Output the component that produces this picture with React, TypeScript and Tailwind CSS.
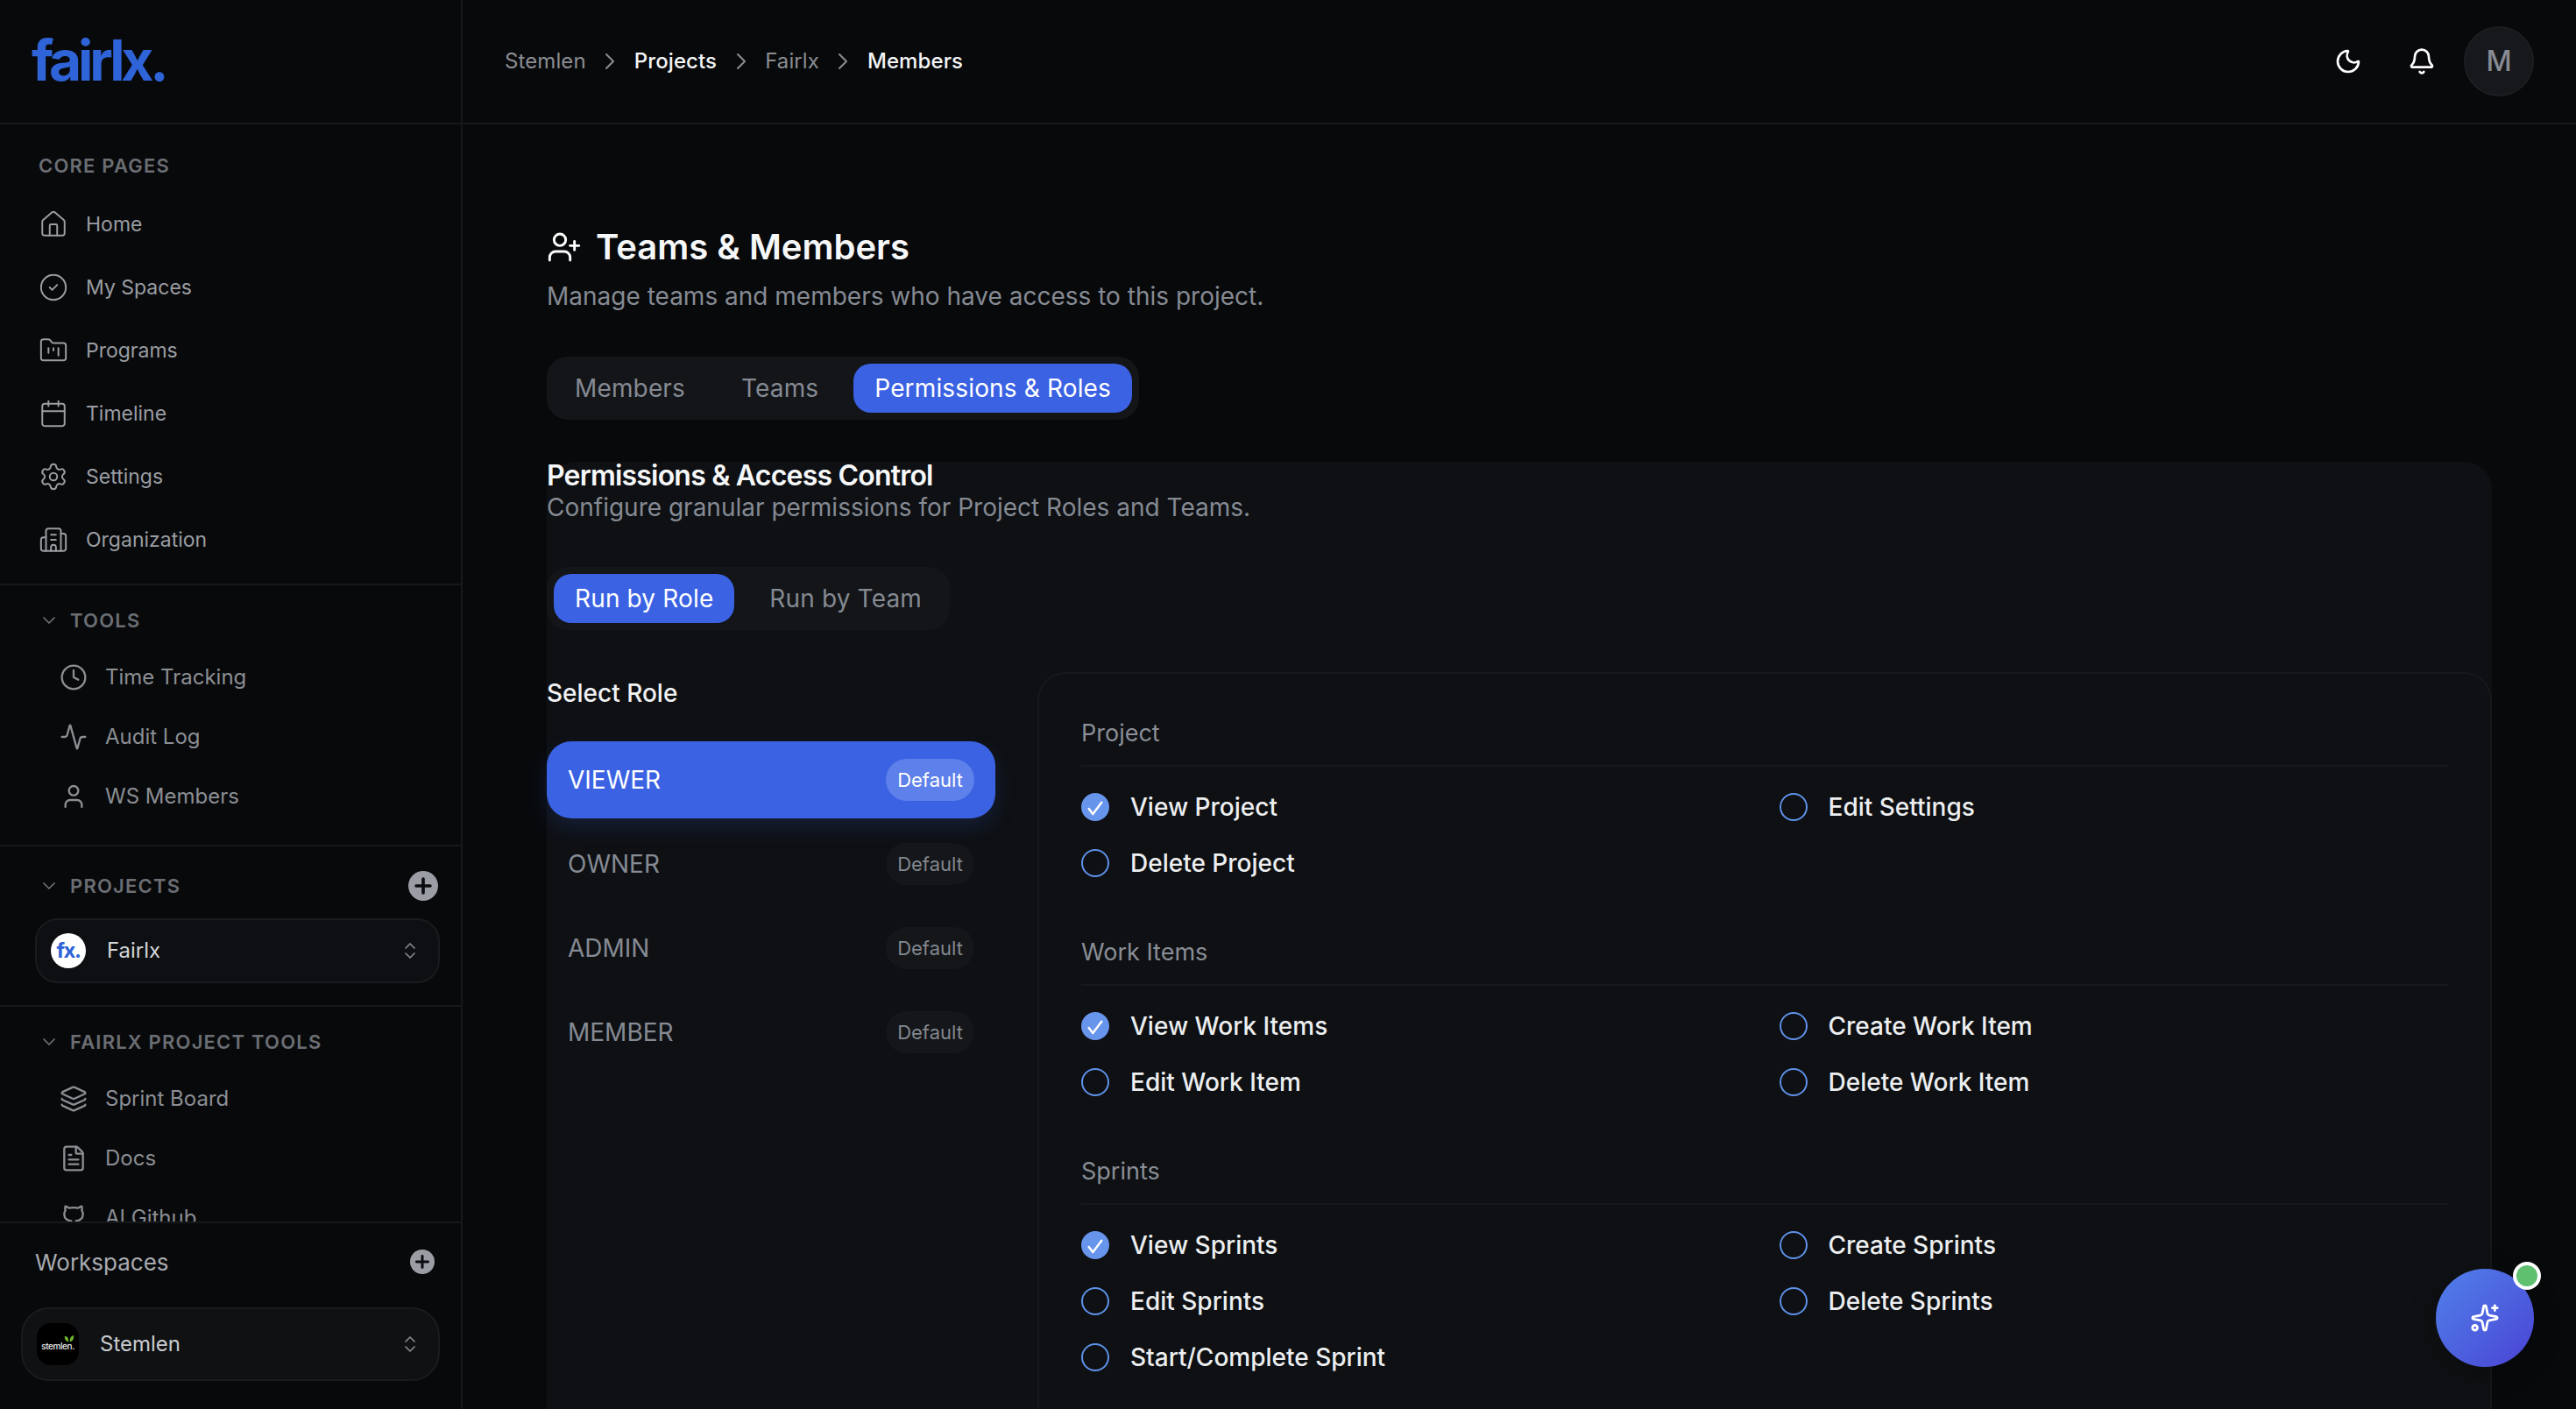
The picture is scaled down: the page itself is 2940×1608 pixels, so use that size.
import React from "react";
import {
  Home, CircleCheck, FolderKanban, Calendar, Settings, Building2, ChevronDown, Clock, Activity, User,
  ChevronsUpDown, Layers, FileText, Github, ChevronRight, Moon, Bell, UserPlus, Sparkles,
} from "lucide-react";

const core = [
  { label: "Home", Icon: Home },
  { label: "My Spaces", Icon: CircleCheck },
  { label: "Programs", Icon: FolderKanban },
  { label: "Timeline", Icon: Calendar },
  { label: "Settings", Icon: Settings },
  { label: "Organization", Icon: Building2 },
];

function PlusDot({ className }: { className: string }) {
  return (
    <svg viewBox="0 0 32 32" className={className}>
      <circle cx="16" cy="16" r="16" fill="#9a9da3" />
      <path d="M16 8.5v15M8.5 16h15" stroke="#0b0c0f" strokeWidth="3.4" strokeLinecap="round" />
    </svg>
  );
}

function SectionHead({ label, plus }: { label: string; plus?: boolean }) {
  return (
    <div className="flex h-[32px] items-center">
      <ChevronDown className="ml-[8px] h-[24px] w-[24px] text-[#6f7277]" strokeWidth={1.75} />
      <span className="ml-[12px] text-[22px] font-semibold tracking-[1.2px] text-[#6b6e73]">{label}</span>
      {plus && <PlusDot className="mr-[2px] ml-auto h-[34px] w-[34px]" />}
    </div>
  );
}

function ToolItem({ label, Icon }: { label: string; Icon: React.ComponentType<{ className?: string; strokeWidth?: number }> }) {
  return (
    <div className="flex h-[68px] items-center pl-[32px] text-[#8b8e93]">
      <Icon className="h-[32px] w-[32px] shrink-0" strokeWidth={1.75} />
      <span className="ml-[20px] text-[24px] whitespace-nowrap">{label}</span>
    </div>
  );
}

function Sidebar() {
  return (
    <aside className="flex h-full w-[528px] shrink-0 flex-col border-r-2 border-[#16181b]">
      <div className="flex h-[142px] shrink-0 items-center border-b-2 border-[#16181b] pl-[36px]">
        <span className="mt-[-2px] text-[64px] leading-none font-bold tracking-[-0.065em] text-[#2f63d8]">fairlx.</span>
      </div>
      <div className="flex-1 overflow-hidden">
        <div className="border-b-2 border-[#16181b] pt-[32px] pb-[14px]">
          <div className="mb-[14px] h-[32px] pl-[44px] text-[22px] leading-[30px] font-semibold tracking-[1.2px] text-[#6b6e73]">CORE PAGES</div>
          {core.map(({ label, Icon }) => (
            <div key={label} className="flex h-[72px] items-center pl-[44px] text-[#9a9da2]">
              <Icon className="h-[34px] w-[34px] shrink-0" strokeWidth={1.4} />
              <span className="ml-[20px] text-[23px]">{label}</span>
            </div>
          ))}
        </div>
        <div className="border-b-2 border-[#16181b] pt-[24px] pb-[21px] pl-[36px]">
          <SectionHead label="TOOLS" />
          <div className="mt-[15px]">
            <ToolItem label="Time Tracking" Icon={Clock} />
            <ToolItem label="Audit Log" Icon={Activity} />
            <ToolItem label="WS Members" Icon={User} />
          </div>
        </div>
        <div className="border-b-2 border-[#16181b] pt-[29px] pr-[24px] pb-[25px] pl-[36px]">
          <SectionHead label="PROJECTS" plus />
          <div className="mt-[21px] ml-[4px] flex h-[74px] items-center rounded-[26px] border-2 border-[#191b1e] bg-[#0d0f12] pr-[20px] pl-[16px]">
            <div className="flex h-[40px] w-[40px] items-center justify-center rounded-full bg-white text-[24px] font-bold tracking-[-1.5px] text-[#2f63d8]">fx.</div>
            <span className="ml-[24px] text-[24px] text-[#d4d6d9]">Fairlx</span>
            <ChevronsUpDown className="ml-auto h-[24px] w-[24px] text-[#85888d]" strokeWidth={1.75} />
          </div>
        </div>
        <div className="pt-[24px] pl-[36px]">
          <SectionHead label="FAIRLX PROJECT TOOLS" />
          <div className="mt-[15px]">
            <ToolItem label="Sprint Board" Icon={Layers} />
            <ToolItem label="Docs" Icon={FileText} />
            <ToolItem label="AI Github" Icon={Github} />
          </div>
        </div>
      </div>
      <div className="h-[214px] shrink-0 border-t-2 border-[#16181b] pt-[26px] pr-[24px] pl-[24px]">
        <div className="flex h-[36px] items-center pl-[16px]">
          <span className="text-[26px] text-[#a8abb0]">Workspaces</span>
          <PlusDot className="mr-[6px] ml-auto h-[28px] w-[28px]" />
        </div>
        <div className="mt-[34px] flex h-[84px] items-center rounded-[32px] border-2 border-[#191b1e] bg-[#0f1113] pr-[20px] pl-[16px]">
          <div className="relative flex h-[48px] w-[48px] items-center justify-center rounded-[16px] bg-black">
            <span className="mt-[4px] text-[10px] font-medium tracking-[-0.4px] text-[#e8e8e8]">stemlen.</span>
            <svg viewBox="0 0 16 10" className="absolute top-[14px] right-[5px] h-[8px] w-[12px]">
              <path d="M1 1c4 0 6 2 6 8C3 9 1 6 1 1zM15 0c-4 0-6 3-6 9 4 0 6-3 6-9z" fill="#6fb52c" />
            </svg>
          </div>
          <span className="ml-[24px] text-[24px] text-[#c9cbcf]">Stemlen</span>
          <ChevronsUpDown className="ml-auto h-[24px] w-[24px] text-[#85888d]" strokeWidth={1.75} />
        </div>
      </div>
    </aside>
  );
}

function Crumb({ children, strong }: { children: string; strong?: boolean }) {
  return <span className={strong ? "font-medium text-[#f4f5f6]" : "text-[#8a8d92]"}>{children}</span>;
}

function Header() {
  const sep = <ChevronRight className="mx-[11.5px] h-[32px] w-[32px] text-[#8a8d92]" strokeWidth={1.5} />;
  return (
    <header className="flex h-[142px] shrink-0 items-center border-b-2 border-[#16181b] px-[48px]">
      <div className="flex items-center text-[24px] tracking-[0.1px]">
        <Crumb>Stemlen</Crumb>
        {sep}
        <Crumb strong>Projects</Crumb>
        {sep}
        <Crumb>Fairlx</Crumb>
        {sep}
        <Crumb strong>Members</Crumb>
      </div>
      <div className="ml-auto flex items-center gap-[12px]">
        <div className="flex h-[72px] w-[72px] items-center justify-center"><Moon className="h-[32px] w-[32px] text-white" /></div>
        <div className="flex h-[72px] w-[72px] items-center justify-center"><Bell className="h-[32px] w-[32px] text-white" /></div>
        <div className="flex h-[80px] w-[80px] items-center justify-center rounded-full border-2 border-[#1c1e21] bg-[#16181b] text-[32px] font-medium text-[#878b93]">M</div>
      </div>
    </header>
  );
}

function Perm({ label, on }: { label: string; on?: boolean }) {
  return (
    <div className="flex h-[48px] items-center">
      {on ? (
        <svg viewBox="0 0 32 32" className="h-[32px] w-[32px] shrink-0">
          <circle cx="16" cy="16" r="16" fill="#6895ec" />
          <path d="M8.7 18l4.6 6 10-13.3" fill="none" stroke="#fff" strokeWidth="2.4" strokeLinecap="round" strokeLinejoin="round" />
        </svg>
      ) : (
        <span className="h-[32px] w-[32px] shrink-0 rounded-full border-2 border-[#5f92ea]" />
      )}
      <span className="ml-[24px] text-[28px] font-medium text-[#eceef0]">{label}</span>
    </div>
  );
}

function PermGroup({ title, rows }: { title: string; rows: [string, boolean?][] }) {
  return (
    <section className="mb-[58px]">
      <div className="border-b-2 border-[#16181b] pb-[16px] text-[27px] leading-[40px] text-[#8a8e96]">{title}</div>
      <div className="mt-[22px] grid grid-cols-2 gap-x-[33px] gap-y-[16px]">
        {rows.map(([l, on]) => (
          <Perm key={l} label={l} on={on} />
        ))}
      </div>
    </section>
  );
}

function Role({ name, active }: { name: string; active?: boolean }) {
  return (
    <div className={`flex h-[88px] items-center justify-between rounded-[28px] pr-[24px] pl-[24px] ${active ? "bg-[#3a62e3] shadow-[0_10px_24px_rgba(58,98,227,0.18)]" : ""}`}>
      <span className={`text-[28px] ${active ? "text-white" : "text-[#858a93]"}`}>{name}</span>
      <span className={`flex h-[48px] w-[101px] items-center justify-center rounded-full text-[22px] ${active ? "bg-[#5e80ea] text-white" : "bg-[#141619] text-[#83878e]"}`}>Default</span>
    </div>
  );
}

function Segmented({ items, active }: { items: string[]; active: string }) {
  return (
    <div className="inline-flex h-[72px] items-center gap-[16px] rounded-[24px] bg-[#131518] px-[8px]">
      {items.map((t) => (
        <div key={t} className={`flex h-[56px] items-center rounded-[20px] px-[24px] text-[28px] tracking-[0.15px] ${t === active ? "bg-[#3a62e3] text-white" : "text-[#858a93]"}`}>{t}</div>
      ))}
    </div>
  );
}

function Main() {
  return (
    <main className="flex min-w-0 flex-1 flex-col overflow-hidden">
      <Header />
      <div className="flex-1 overflow-hidden px-[96px] pt-[112px]">
        <div className="flex h-[56px] items-center">
          <UserPlus className="h-[40px] w-[40px] text-white" strokeWidth={1.75} />
          <h1 className="ml-[16px] text-[40px] font-semibold text-[#f6f7f8]">Teams &amp; Members</h1>
        </div>
        <p className="mt-[8px] text-[28px] leading-[40px] text-[#858a93]">Manage teams and members who have access to this project.</p>
        <div className="mt-[49px]">
          <Segmented items={["Members", "Teams", "Permissions & Roles"]} active="Permissions & Roles" />
        </div>
        <div className="mt-[48px] rounded-[32px] bg-[#0e1013]">
          <h2 className="text-[32px] leading-[32px] font-semibold tracking-[-0.8px] text-[#f6f7f8]">Permissions &amp; Access Control</h2>
          <p className="text-[28px] leading-[40px] text-[#858a93]">Configure granular permissions for Project Roles and Teams.</p>
          <div className="mt-[48px]">
            <Segmented items={["Run by Role", "Run by Team"]} active="Run by Role" />
          </div>
          <div className="mt-[48px] flex gap-[48px]">
            <div className="w-[512px] shrink-0">
              <div className="mt-[4px] mb-[35px] text-[28px] leading-[40px] font-medium text-[#f1f2f4]">Select Role</div>
              <div className="flex flex-col gap-[8px]">
                <Role name="VIEWER" active />
                <Role name="OWNER" />
                <Role name="ADMIN" />
                <Role name="MEMBER" />
              </div>
            </div>
            <div className="min-w-0 flex-1 rounded-[32px] border-2 border-[#16181b] p-[48px]">
              <PermGroup title="Project" rows={[["View Project", true], ["Edit Settings"], ["Delete Project"]]} />
              <PermGroup title="Work Items" rows={[["View Work Items", true], ["Create Work Item"], ["Edit Work Item"], ["Delete Work Item"]]} />
              <PermGroup title="Sprints" rows={[["View Sprints", true], ["Create Sprints"], ["Edit Sprints"], ["Delete Sprints"], ["Start/Complete Sprint"]]} />
            </div>
          </div>
        </div>
      </div>
    </main>
  );
}

export default function App() {
  return (
    <div className="relative flex h-screen overflow-hidden bg-[#08090b] font-[Inter,sans-serif]">
      <Sidebar />
      <Main />
      <div className="absolute top-[1448px] left-[2780px] flex h-[112px] w-[112px] items-center justify-center rounded-full bg-gradient-to-br from-[#5080ea] to-[#4a42d4] shadow-[0_8px_32px_rgba(0,0,0,0.25)]">
        <Sparkles className="h-[34px] w-[34px] text-white" strokeWidth={2} />
        <span className="absolute top-[-8px] right-[-8px] h-[32px] w-[32px] rounded-full border-4 border-white bg-[#5fc16f]" />
      </div>
    </div>
  );
}
